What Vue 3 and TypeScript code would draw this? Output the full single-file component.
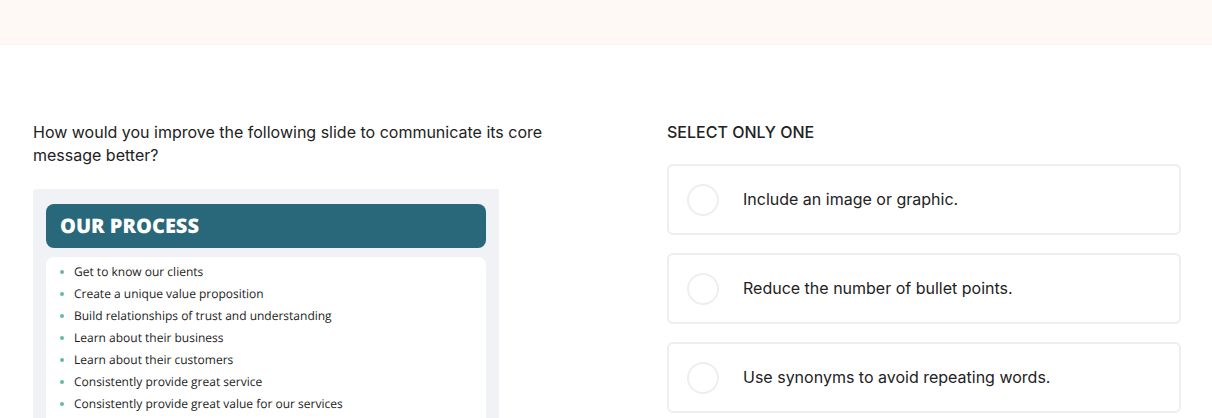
<script setup lang="ts">
import { ref } from 'vue'

const steps: string[] = [
  'Get to know our clients',
  'Create a unique value proposition',
  'Build relationships of trust and understanding',
  'Learn about their business',
  'Learn about their customers',
  'Consistently provide great service',
  'Consistently provide great value for our services',
]

const options: string[] = [
  'Include an image or graphic.',
  'Reduce the number of bullet points.',
  'Use synonyms to avoid repeating words.',
]

const selected = ref<string | null>(null)
</script>

<template>
  <div class="page">
    <header class="banner"></header>
    <main class="columns">
      <section class="question">
        <p class="prompt">
          How would you improve the following slide to communicate its core message better?
        </p>
        <article class="slide">
          <h2 class="slide-title">OUR PROCESS</h2>
          <ul class="slide-body">
            <li v-for="step in steps" :key="step">{{ step }}</li>
          </ul>
        </article>
      </section>

      <fieldset class="answers">
        <legend>SELECT ONLY ONE</legend>
        <div class="options">
          <label v-for="option in options" :key="option" class="option">
            <input v-model="selected" type="radio" name="answer" :value="option" />
            <span>{{ option }}</span>
          </label>
        </div>
      </fieldset>
    </main>
  </div>
</template>

<style>
body {
  margin: 0;
  background: #fff;
}
</style>

<style scoped>
.page {
  display: flex;
  flex-direction: column;
  height: 100vh;
  overflow: hidden;
  box-sizing: border-box;
  background: #fff;
  color: #222;
  font-family: Inter, 'Liberation Sans', sans-serif;
  font-size: 16px;
  line-height: 23px;
}

.banner {
  flex: none;
  height: 44px;
  background: #fef9f5;
  border-bottom: 1px solid #f7f3ef;
}

.columns {
  flex: 1;
  display: grid;
  grid-template-columns: 1fr 1fr;
  column-gap: 120px;
  padding: 76px 31px 0 33px;
}

.question {
  display: flex;
  flex-direction: column;
  align-items: flex-start;
}

.prompt {
  margin: 0 0 22px;
}

.slide {
  flex: 1;
  display: flex;
  flex-direction: column;
  box-sizing: border-box;
  width: 100%;
  max-width: 466px;
  padding: 15px 13px 0;
  background: #f0f2f5;
  border-radius: 4px 0 0 0;
  font-family: 'Open Sans', 'Noto Sans', sans-serif;
  text-rendering: geometricPrecision;
}

.slide-title {
  margin: 0 0 9px;
  padding: 0 14px;
  border-radius: 8px;
  background: #29687a;
  color: #fff;
  font-size: 20px;
  font-weight: 800;
  line-height: 44px;
}

.slide-body {
  flex: 1;
  margin: 0;
  padding: 4px 14px 0;
  list-style: none;
  border-radius: 8px 8px 0 0;
  background: #fff;
  color: #222;
  font-size: 12px;
  line-height: 22px;
}

.slide-body li {
  display: flex;
  align-items: center;
  gap: 10px;
}

.slide-body li::before {
  content: '';
  width: 4px;
  height: 4px;
  border-radius: 50%;
  background: #66b8a8;
}

.answers {
  min-width: 0;
  margin: 0;
  padding: 0;
  border: 0;
}

.answers legend {
  padding: 0;
  font-weight: 500;
}

.options {
  display: flex;
  flex-direction: column;
  gap: 18px;
  padding-top: 20px;
}

.option {
  display: flex;
  align-items: center;
  gap: 24px;
  box-sizing: border-box;
  min-height: 71px;
  padding: 0 18px;
  border: 2px solid #eee;
  border-radius: 6px;
  cursor: pointer;
}

.option input {
  appearance: none;
  flex: none;
  width: 32px;
  height: 32px;
  margin: 0;
  border: 2px solid #eee;
  border-radius: 50%;
  background: #fff;
}

.option input:checked {
  border: 10px solid #29687a;
}
</style>
